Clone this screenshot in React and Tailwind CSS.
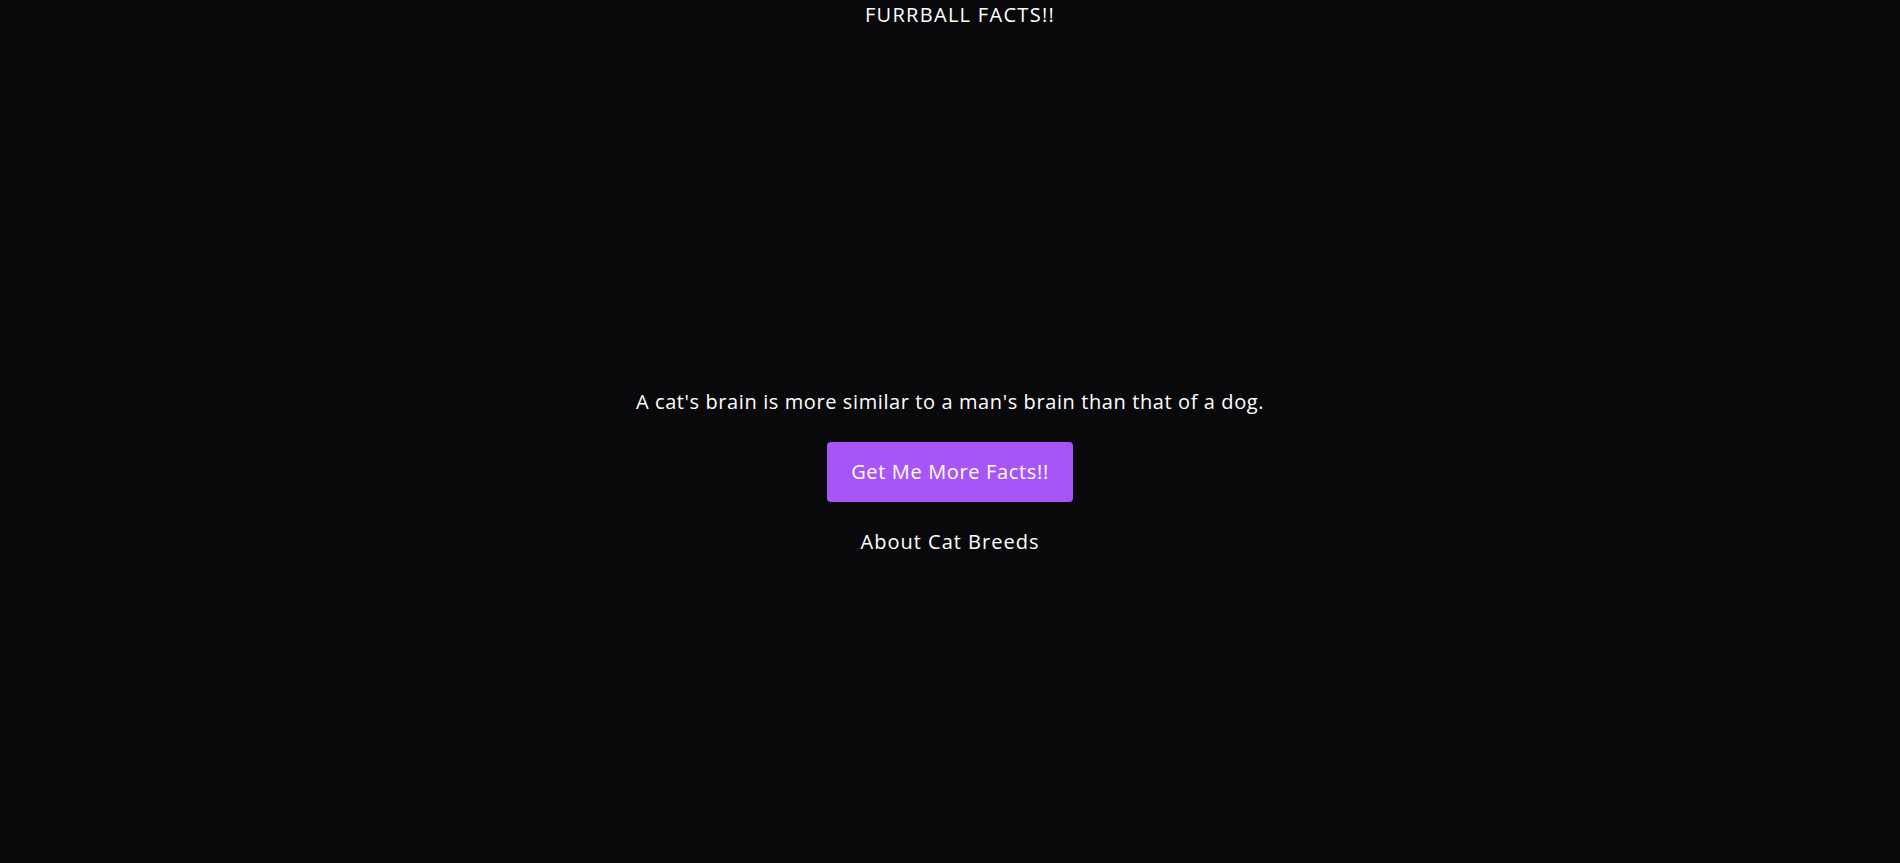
const App = () => {
  return (
    <div className="min-h-screen bg-[#09090b] text-white font-['Open_Sans',sans-serif]">
      {/* Header */}
      <h1 className="pl-5 pt-px text-center text-xl font-normal tracking-[1.3px]">FURRBALL FACTS!!</h1>

      {/* Fact */}
      <main className="flex flex-col items-center pt-[359px]">
        <p className="text-xl tracking-[0.6px]">A cat's brain is more similar to a man's brain than that of a dog.</p>
        <button type="button" className="mt-[26px] rounded bg-[#a855f7] px-6 py-4 text-xl tracking-[0.65px] text-white">
          Get Me More Facts!!
        </button>
        <a href="#" className="mt-[26px] text-xl tracking-[1px]">About Cat Breeds</a>
      </main>
    </div>
  );
};

export default App;
